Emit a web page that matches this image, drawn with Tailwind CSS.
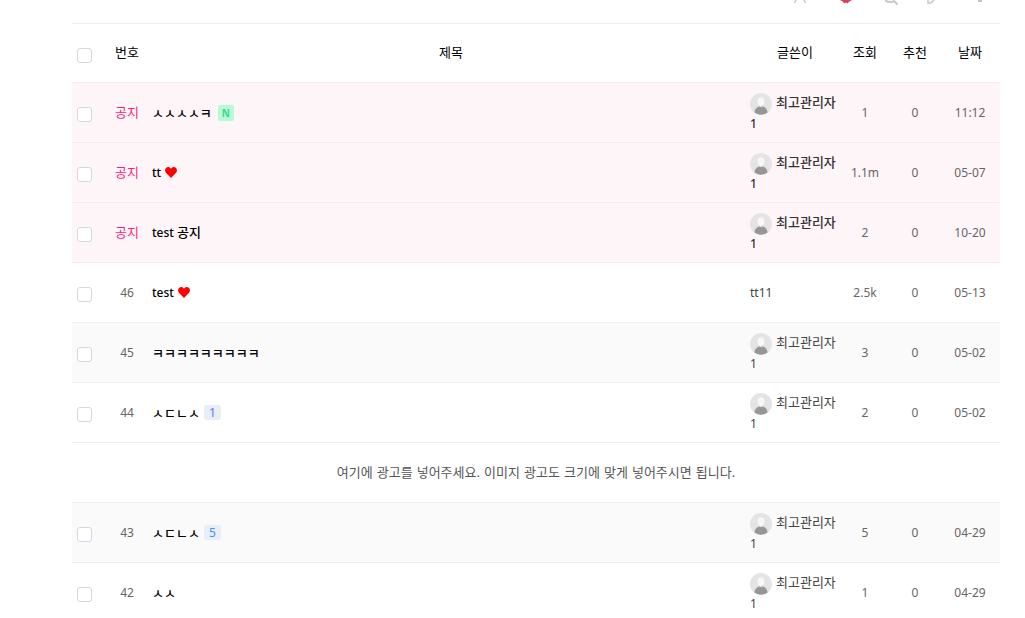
<!DOCTYPE html>
<html lang="ko">
<head>
  <meta charset="UTF-8">
  <meta name="viewport" content="width=device-width, initial-scale=1.0" />
  <title>게시판</title>
  <script src="https://cdn.jsdelivr.net/npm/@tailwindcss/browser@4"></script>
</head>
<body class="bg-white overflow-hidden font-['Noto_Sans','Noto_Sans_CJK_KR',sans-serif] text-[12px] leading-[20px] text-[#666]">
  <svg class="hidden">
    <symbol id="avatar" viewBox="0 0 22 22">
      <circle cx="11" cy="11" r="11" fill="#e4e4e4"/>
      <ellipse cx="11" cy="8.500" rx="3.300" ry="4.300" fill="#f8f8f8"/>
      <path d="M4.500 19.500c0-3.500 2.200-5.500 4.700-6l1.800.8 1.800-.8c2.500.5 4.700 2.500 4.700 6a11 11 0 0 1-13 0z" fill="#969696"/>
    </symbol>
    <symbol id="heart" viewBox="0 0 12 11">
      <path d="M6 11 .9 5.700C-.4 4.200-.2 1.900 1.200.8 2.700-.4 4.800 0 6 1.700 7.200 0 9.300-.4 10.800.8c1.400 1.100 1.600 3.400.3 4.900z" fill="#ff0000"/>
    </symbol>
  </svg>

  <div class="w-[928px] ml-[72px]">
    <!-- toolbar, scrolled mostly out of view -->
    <div class="h-[23px] relative overflow-hidden">
      <svg class="absolute top-0 left-[721px] w-[14px] h-[4px]" viewBox="0 0 14 4" fill="none" stroke="#c9c9c9" stroke-width="1.500"><path d="M3 0 1.500 3M11 0l1.500 3"/></svg>
      <svg class="absolute top-0 left-[768px] w-[12px] h-[4px]" viewBox="0 0 12 4" fill="#d9435a"><path d="M0 0h12L9 1.800 7.500 3.500 6 2.500 4.500 3.500 3 1.800z"/></svg>
      <svg class="absolute top-0 left-[813px] w-[13px] h-[5px]" viewBox="0 0 13 5" fill="none" stroke="#c8c8c8" stroke-width="2"><path d="M0 0c1 1.500 3 2 6 2 1 0 2-.5 3-1l3.500 3.500"/></svg>
      <svg class="absolute top-0 left-[855px] w-[8px] h-[4px]" viewBox="0 0 8 4" fill="none" stroke="#c8c8c8" stroke-width="1.500"><path d="M1 0v3h3L7 0"/></svg>
      <div class="absolute top-0 left-[906px] w-[4px] h-[2px] bg-[#c4c4c4]"></div>
    </div>

    <!-- header -->
    <div class="h-[59px] pb-[2px] border-t border-[#eee] grid grid-cols-[30px_50px_598px_90px_50px_50px_60px] items-center text-center text-[13px] text-black">
      <div class="flex pl-[5px]"><span class="w-[15px] h-[15px] mt-[7px] bg-white border border-[#d4d7df] rounded-[3px]"></span></div>
      <div>번호</div>
      <div>제목</div>
      <div>글쓴이</div>
      <div>조회</div>
      <div>추천</div>
      <div>날짜</div>
    </div>

    <!-- notices -->
    <div class="h-[60px] border-t border-[#eee] bg-[#fef5f9] grid grid-cols-[30px_50px_598px_90px_50px_50px_60px] items-center text-center">
      <div class="flex pl-[5px]"><span class="w-[15px] h-[15px] mt-[4px] bg-white border border-[#d4d7df] rounded-[3px]"></span></div>
      <div class="pb-[2px] text-[13px] text-[#ff1f7d]">공지</div>
      <div class="flex items-center gap-[6px] text-black font-medium"><span class="text-[13px]">ㅅㅅㅅㅅㅋ</span><span class="w-[16px] h-[16px] bg-[#b6fbd6] text-[#3bd68c] rounded-[2px] text-[10px] font-bold leading-[16px]">N</span></div>
      <div class="text-left font-medium leading-[18px] text-[#333]"><svg class="inline-block w-[22px] h-[22px] mr-[4px] align-[-8px]"><use href="#avatar"/></svg><span class="text-[13px]">최고관리자</span> 1</div>
      <div>1</div>
      <div>0</div>
      <div>11:12</div>
    </div>
    <div class="h-[60px] border-t border-[#eee] bg-[#fef5f9] grid grid-cols-[30px_50px_598px_90px_50px_50px_60px] items-center text-center">
      <div class="flex pl-[5px]"><span class="w-[15px] h-[15px] mt-[4px] bg-white border border-[#d4d7df] rounded-[3px]"></span></div>
      <div class="pb-[2px] text-[13px] text-[#ff1f7d]">공지</div>
      <div class="flex items-center gap-[4px] text-black font-medium"><span>tt</span><svg class="w-[12px] h-[11px]"><use href="#heart"/></svg></div>
      <div class="text-left font-medium leading-[18px] text-[#333]"><svg class="inline-block w-[22px] h-[22px] mr-[4px] align-[-8px]"><use href="#avatar"/></svg><span class="text-[13px]">최고관리자</span> 1</div>
      <div>1.1m</div>
      <div>0</div>
      <div>05-07</div>
    </div>
    <div class="h-[60px] border-t border-[#eee] bg-[#fef5f9] grid grid-cols-[30px_50px_598px_90px_50px_50px_60px] items-center text-center">
      <div class="flex pl-[5px]"><span class="w-[15px] h-[15px] mt-[4px] bg-white border border-[#d4d7df] rounded-[3px]"></span></div>
      <div class="pb-[2px] text-[13px] text-[#ff1f7d]">공지</div>
      <div class="text-left text-black font-medium">test <span class="text-[13px]">공지</span></div>
      <div class="text-left font-medium leading-[18px] text-[#333]"><svg class="inline-block w-[22px] h-[22px] mr-[4px] align-[-8px]"><use href="#avatar"/></svg><span class="text-[13px]">최고관리자</span> 1</div>
      <div>2</div>
      <div>0</div>
      <div>10-20</div>
    </div>

    <!-- posts -->
    <div class="h-[60px] border-t border-[#eee] grid grid-cols-[30px_50px_598px_90px_50px_50px_60px] items-center text-center">
      <div class="flex pl-[5px]"><span class="w-[15px] h-[15px] mt-[4px] bg-white border border-[#d4d7df] rounded-[3px]"></span></div>
      <div>46</div>
      <div class="flex items-center gap-[4px] text-black font-medium"><span>test</span><svg class="w-[12px] h-[11px]"><use href="#heart"/></svg></div>
      <div class="text-left text-[#444]">tt11</div>
      <div>2.5k</div>
      <div>0</div>
      <div>05-13</div>
    </div>
    <div class="h-[60px] border-t border-[#eee] bg-[#fafafa] grid grid-cols-[30px_50px_598px_90px_50px_50px_60px] items-center text-center">
      <div class="flex pl-[5px]"><span class="w-[15px] h-[15px] mt-[4px] bg-white border border-[#d4d7df] rounded-[3px]"></span></div>
      <div>45</div>
      <div class="text-left text-[13px] text-black font-medium">ㅋㅋㅋㅋㅋㅋㅋㅋㅋ</div>
      <div class="text-left leading-[18px] text-[#444]"><svg class="inline-block w-[22px] h-[22px] mr-[4px] align-[-8px]"><use href="#avatar"/></svg><span class="text-[13px]">최고관리자</span> 1</div>
      <div>3</div>
      <div>0</div>
      <div>05-02</div>
    </div>
    <div class="h-[60px] border-t border-[#eee] grid grid-cols-[30px_50px_598px_90px_50px_50px_60px] items-center text-center">
      <div class="flex pl-[5px]"><span class="w-[15px] h-[15px] mt-[4px] bg-white border border-[#d4d7df] rounded-[3px]"></span></div>
      <div>44</div>
      <div class="flex items-center gap-[4px] text-black font-medium"><span class="text-[13px]">ㅅㄷㄴㅅ</span><span class="w-[17px] h-[15px] bg-[#e8edf7] text-[#5b7cf0] rounded-[3px] font-normal leading-[15px]">1</span></div>
      <div class="text-left leading-[18px] text-[#444]"><svg class="inline-block w-[22px] h-[22px] mr-[4px] align-[-8px]"><use href="#avatar"/></svg><span class="text-[13px]">최고관리자</span> 1</div>
      <div>2</div>
      <div>0</div>
      <div>05-02</div>
    </div>

    <!-- ad row -->
    <div class="h-[60px] pb-[2px] border-t border-[#eee] flex items-center justify-center text-[13px] text-[#555] [word-spacing:0.7px]">여기에 광고를 넣어주세요. 이미지 광고도 크기에 맞게 넣어주시면 됩니다.</div>

    <div class="h-[60px] border-t border-[#eee] bg-[#fafafa] grid grid-cols-[30px_50px_598px_90px_50px_50px_60px] items-center text-center">
      <div class="flex pl-[5px]"><span class="w-[15px] h-[15px] mt-[4px] bg-white border border-[#d4d7df] rounded-[3px]"></span></div>
      <div>43</div>
      <div class="flex items-center gap-[4px] text-black font-medium"><span class="text-[13px]">ㅅㄷㄴㅅ</span><span class="w-[17px] h-[15px] bg-[#e6eefa] text-[#4d90f0] rounded-[3px] font-normal leading-[15px]">5</span></div>
      <div class="text-left leading-[18px] text-[#444]"><svg class="inline-block w-[22px] h-[22px] mr-[4px] align-[-8px]"><use href="#avatar"/></svg><span class="text-[13px]">최고관리자</span> 1</div>
      <div>5</div>
      <div>0</div>
      <div>04-29</div>
    </div>
    <div class="h-[60px] border-t border-[#eee] grid grid-cols-[30px_50px_598px_90px_50px_50px_60px] items-center text-center">
      <div class="flex pl-[5px]"><span class="w-[15px] h-[15px] mt-[4px] bg-white border border-[#d4d7df] rounded-[3px]"></span></div>
      <div>42</div>
      <div class="text-left text-[13px] text-black font-medium">ㅅㅅ</div>
      <div class="text-left leading-[18px] text-[#444]"><svg class="inline-block w-[22px] h-[22px] mr-[4px] align-[-8px]"><use href="#avatar"/></svg><span class="text-[13px]">최고관리자</span> 1</div>
      <div>1</div>
      <div>0</div>
      <div>04-29</div>
    </div>
  </div>
</body>
</html>
